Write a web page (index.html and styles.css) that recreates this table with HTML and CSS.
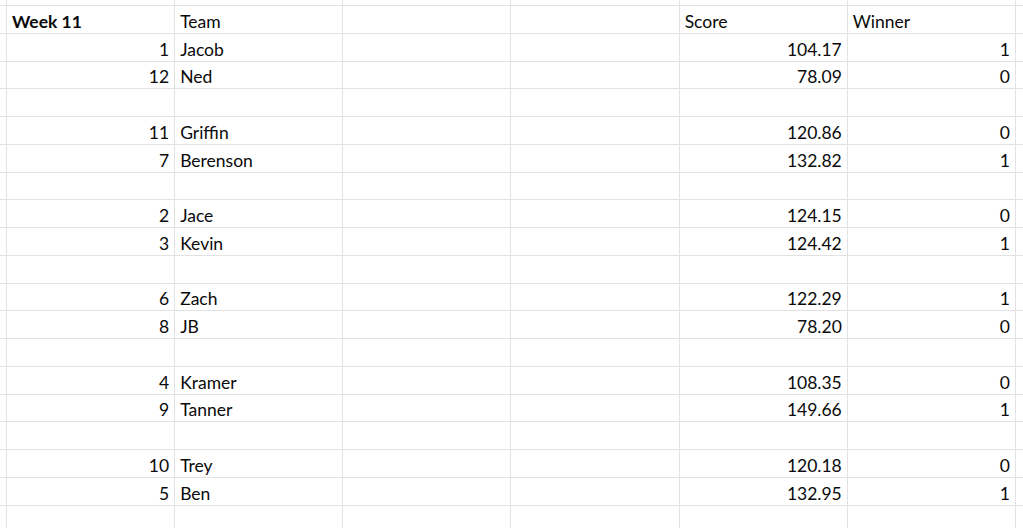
FILE: index.html
```html
<!DOCTYPE html>
<html>
<head>
<meta charset="utf-8">
<link rel="stylesheet" href="styles.css">
</head>
<body>
<div class="sheet">
  <div class="row top"><div class="c edge"></div><div class="c"></div><div class="c"></div><div class="c"></div><div class="c"></div><div class="c"></div><div class="c"></div><div class="c"></div></div>
  <div class="row"><div class="c edge"></div><div class="c b">Week 11</div><div class="c">Team</div><div class="c"></div><div class="c"></div><div class="c">Score</div><div class="c">Winner</div><div class="c"></div></div>
  <div class="row"><div class="c edge"></div><div class="c r">1</div><div class="c">Jacob</div><div class="c"></div><div class="c"></div><div class="c r">104.17</div><div class="c r">1</div><div class="c"></div></div>
  <div class="row"><div class="c edge"></div><div class="c r">12</div><div class="c">Ned</div><div class="c"></div><div class="c"></div><div class="c r">78.09</div><div class="c r">0</div><div class="c"></div></div>
  <div class="row"><div class="c edge"></div><div class="c"></div><div class="c"></div><div class="c"></div><div class="c"></div><div class="c"></div><div class="c"></div><div class="c"></div></div>
  <div class="row"><div class="c edge"></div><div class="c r">11</div><div class="c">Griffin</div><div class="c"></div><div class="c"></div><div class="c r">120.86</div><div class="c r">0</div><div class="c"></div></div>
  <div class="row"><div class="c edge"></div><div class="c r">7</div><div class="c">Berenson</div><div class="c"></div><div class="c"></div><div class="c r">132.82</div><div class="c r">1</div><div class="c"></div></div>
  <div class="row"><div class="c edge"></div><div class="c"></div><div class="c"></div><div class="c"></div><div class="c"></div><div class="c"></div><div class="c"></div><div class="c"></div></div>
  <div class="row"><div class="c edge"></div><div class="c r">2</div><div class="c">Jace</div><div class="c"></div><div class="c"></div><div class="c r">124.15</div><div class="c r">0</div><div class="c"></div></div>
  <div class="row"><div class="c edge"></div><div class="c r">3</div><div class="c">Kevin</div><div class="c"></div><div class="c"></div><div class="c r">124.42</div><div class="c r">1</div><div class="c"></div></div>
  <div class="row"><div class="c edge"></div><div class="c"></div><div class="c"></div><div class="c"></div><div class="c"></div><div class="c"></div><div class="c"></div><div class="c"></div></div>
  <div class="row"><div class="c edge"></div><div class="c r">6</div><div class="c">Zach</div><div class="c"></div><div class="c"></div><div class="c r">122.29</div><div class="c r">1</div><div class="c"></div></div>
  <div class="row"><div class="c edge"></div><div class="c r">8</div><div class="c">JB</div><div class="c"></div><div class="c"></div><div class="c r">78.20</div><div class="c r">0</div><div class="c"></div></div>
  <div class="row"><div class="c edge"></div><div class="c"></div><div class="c"></div><div class="c"></div><div class="c"></div><div class="c"></div><div class="c"></div><div class="c"></div></div>
  <div class="row"><div class="c edge"></div><div class="c r">4</div><div class="c">Kramer</div><div class="c"></div><div class="c"></div><div class="c r">108.35</div><div class="c r">0</div><div class="c"></div></div>
  <div class="row"><div class="c edge"></div><div class="c r">9</div><div class="c">Tanner</div><div class="c"></div><div class="c"></div><div class="c r">149.66</div><div class="c r">1</div><div class="c"></div></div>
  <div class="row"><div class="c edge"></div><div class="c"></div><div class="c"></div><div class="c"></div><div class="c"></div><div class="c"></div><div class="c"></div><div class="c"></div></div>
  <div class="row"><div class="c edge"></div><div class="c r">10</div><div class="c">Trey</div><div class="c"></div><div class="c"></div><div class="c r">120.18</div><div class="c r">0</div><div class="c"></div></div>
  <div class="row"><div class="c edge"></div><div class="c r">5</div><div class="c">Ben</div><div class="c"></div><div class="c"></div><div class="c r">132.95</div><div class="c r">1</div><div class="c"></div></div>
  <div class="row"><div class="c edge"></div><div class="c"></div><div class="c"></div><div class="c"></div><div class="c"></div><div class="c"></div><div class="c"></div><div class="c"></div></div>
</div>
</body>
</html>
```

FILE: styles.css
```css
html, body {
  margin: 0;
  padding: 0;
  background: #ffffff;
  overflow: hidden;
}
.sheet {
  display: flex;
  flex-direction: column;
  width: 1023px;
  height: 528px;
  font-family: Lato, "Liberation Sans", sans-serif;
  font-size: 17.5px;
  color: #0a0a0a;
}
.row {
  display: grid;
  grid-template-columns: 7px repeat(6, 168.17px) 1fr;
  height: 27.78px;
  flex: none;
}
.row.top {
  height: 6px;
}
.c {
  border-right: 1px solid #e2e2e2;
  border-bottom: 1px solid #e2e2e2;
  display: flex;
  align-items: flex-end;
  padding: 0 5px 1px 5px;
  line-height: 1.2;
  white-space: nowrap;
  overflow: hidden;
}
.c.edge {
  padding: 0;
}
.c.r {
  justify-content: flex-end;
}
.c.b {
  font-weight: 700;
}
```
